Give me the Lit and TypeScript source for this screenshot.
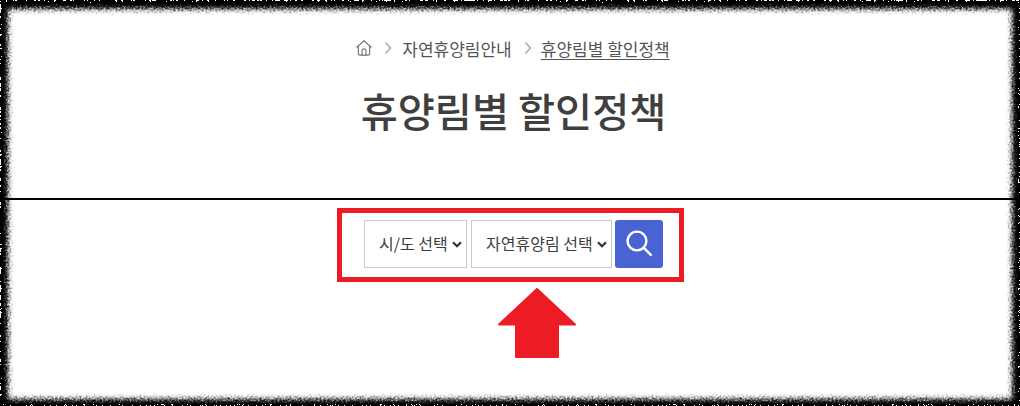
import { LitElement, html, css } from "lit";
import { customElement } from "lit/decorators.js";

@customElement("app-root")
export class AppRoot extends LitElement {
  static styles = css`
    :host {
      display: block;
      width: 1020px;
      height: 406px;
      font-family: "Noto Sans CJK KR", "Noto Sans", sans-serif;
      color: #444;
      overflow: hidden;
    }
    .stage {
      position: relative;
      width: 1020px;
      height: 406px;
      background: #fff;
      display: flex;
      flex-direction: column;
      align-items: center;
      overflow: hidden;
    }
    .frame {
      position: absolute;
      inset: 0;
      pointer-events: none;
    }
    .crumbs {
      display: flex;
      align-items: center;
      height: 24px;
      margin-top: 37px;
      margin-left: 6px;
      font-size: 17px;
      line-height: 24px;
      color: #555;
    }
    .home { width: 16px; height: 16px; display: block; margin-right: 12px; margin-top: -3px; }
    .chev { width: 8px; height: 14px; display: block; margin-right: 10px; margin-top: -3px; }
    .chev.second { margin-right: 9px; }
    .crumbs .mid { margin-right: 12px; }
    .crumbs .cur { text-decoration: underline; text-underline-offset: 3px; }
    h1 {
      margin: 20px 0 0 7px;
      font-size: 40.3px;
      line-height: 58px;
      font-weight: 500;
      color: #3f3f3f;
    }
    .rule {
      align-self: stretch;
      height: 2px;
      background: #000;
      margin-top: 59px;
      flex: none;
    }
    .search {
      box-sizing: border-box;
      margin-top: 8px;
      width: 347px;
      height: 74px;
      border: 5px solid #ed1c24;
      display: flex;
      align-items: center;
      padding: 0 0 2px 22px;
      gap: 4px;
      flex: none;
    }
    .sel { position: relative; flex: none; height: 48px; }
    .sel svg {
      position: absolute;
      top: 21px;
      width: 10px;
      height: 7px;
      pointer-events: none;
    }
    .sel.a svg { left: 88px; }
    .sel.b svg { left: 126px; }
    select {
      appearance: none;
      -webkit-appearance: none;
      box-sizing: border-box;
      display: block;
      height: 48px;
      border: 1px solid #ccc;
      border-radius: 0;
      background: #fff;
      font: inherit;
      font-size: 16px;
      color: #3d3d3d;
      padding: 0 0 2px 14.5px;
      outline: none;
    }
    .a select { width: 103px; }
    .b select { width: 141px; }
    .btn {
      width: 48px;
      height: 48px;
      border: 0;
      border-radius: 3px;
      background: #4a63d2;
      padding: 0;
      margin-left: -1px;
      display: flex;
      align-items: center;
      justify-content: center;
      flex: none;
    }
    .btn svg { width: 26px; height: 26px; display: block; margin-top: -2px; }
    .arrow { display: block; width: 78px; height: 70px; margin-top: 6px; margin-left: 54px; flex: none; }
  `;

  render() {
    const chevSel = html`<svg viewBox="0 0 10 7" fill="none" stroke="#333" stroke-width="2.2"><path d="M1 1.2 5 5.2l4-4"/></svg>`;
    return html`
      <div class="stage">
        <nav class="crumbs">
          <svg class="home" viewBox="0 0 16 16" fill="none" stroke="#777" stroke-width="1.2" stroke-linejoin="round" stroke-linecap="round">
            <path d="M.8 7.2 8 .8l7.2 6.4M2.4 6v7.6a1.6 1.6 0 0 0 1.6 1.6h8a1.6 1.6 0 0 0 1.6-1.6V6"/>
            <path d="M6 15.2v-4.4a2 2 0 0 1 4 0v4.4"/>
          </svg>
          <svg class="chev" viewBox="0 0 8 14" fill="none" stroke="#aaa" stroke-width="1.6"><path d="M1.5 1.5 6.5 7l-5 5.5"/></svg>
          <span class="mid">자연휴양림안내</span>
          <svg class="chev second" viewBox="0 0 8 14" fill="none" stroke="#aaa" stroke-width="1.6"><path d="M1.5 1.5 6.5 7l-5 5.5"/></svg>
          <span class="cur">휴양림별 할인정책</span>
        </nav>
        <h1>휴양림별 할인정책</h1>
        <div class="rule"></div>
        <div class="search">
          <div class="sel a"><select><option>시/도 선택</option></select>${chevSel}</div>
          <div class="sel b"><select><option>자연휴양림 선택</option></select>${chevSel}</div>
          <button class="btn" aria-label="검색">
            <svg viewBox="0 0 26 26" fill="none" stroke="#fff" stroke-width="2.4" stroke-linecap="round">
              <circle cx="11" cy="11" r="9.4"/><path d="M17.8 17.8 24.8 24.8"/>
            </svg>
          </button>
        </div>
        <svg class="arrow" viewBox="0 0 78 70">
          <path fill="#ed1c24" stroke="#ed1c24" stroke-width="2" stroke-linejoin="round" d="M39 1 77 36.5H60V69H18V36.5H1Z"/>
        </svg>
        <svg class="frame" width="1020" height="406" viewBox="0 0 1020 406">
          <defs>
            <filter id="rough" x="0" y="0" width="1020" height="406" filterUnits="userSpaceOnUse" primitiveUnits="userSpaceOnUse">
              <feGaussianBlur in="SourceGraphic" stdDeviation="2.4" result="b"/>
              <feTurbulence type="fractalNoise" baseFrequency="0.5" numOctaves="2" seed="4" result="n"/>
              <feDisplacementMap in="b" in2="n" scale="8" xChannelSelector="R" yChannelSelector="G"/>
            </filter>
          </defs>
          <path filter="url(#rough)" fill="#000" fill-rule="evenodd" d="M-20 -20H1040V426H-20ZM8 9V399H1012V9Z"/>
        </svg>
      </div>
    `;
  }
}
